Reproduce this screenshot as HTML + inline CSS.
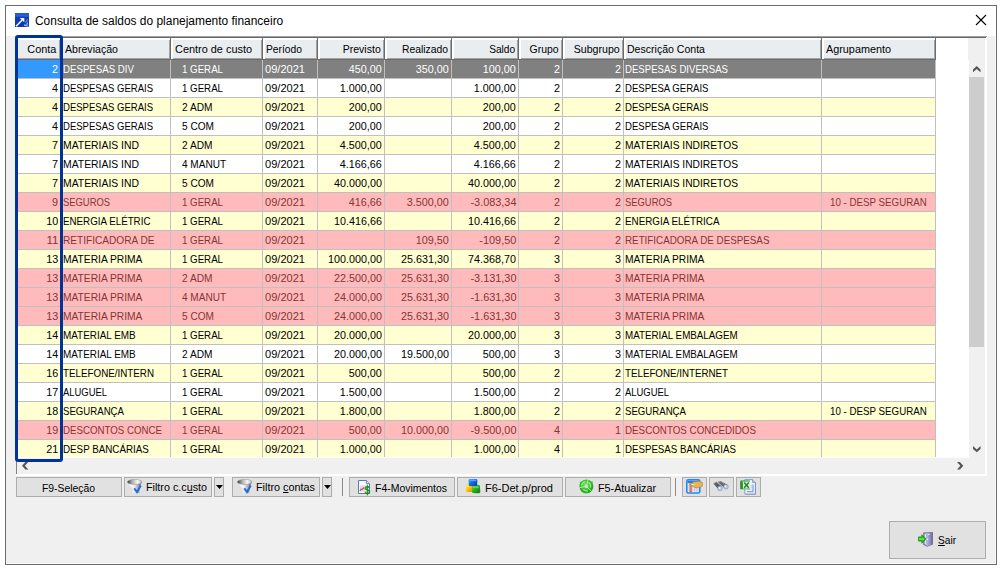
<!DOCTYPE html>
<html><head><meta charset="utf-8"><title>Consulta de saldos do planejamento financeiro</title>
<style>
html,body{margin:0;padding:0;}
body{width:1001px;height:568px;background:#fff;overflow:hidden;position:relative;font-family:"Liberation Sans",sans-serif;font-size:11px;color:#000;}
.abs{position:absolute;}
#win{position:absolute;left:5px;top:5px;width:990px;height:558px;border:1px solid #6b6b6b;background:#f0f0f0;box-shadow:inset -1px -1px 0 #fafafa;}
#title{position:absolute;left:6px;top:6px;width:990px;height:30px;background:#fff;}
#ttext{position:absolute;left:35px;top:14px;transform:scaleX(0.995);transform-origin:left center;font-size:12px;line-height:15px;white-space:nowrap;color:#000;}
.hc{position:absolute;top:38px;height:22px;background:#e9edf0;box-shadow:inset -1px -1px 0 #6b6b6b, inset 2px 2px 0 #fff, inset -2px -2px 0 #a3a3a3;box-sizing:border-box;line-height:23px;white-space:nowrap;overflow:hidden;}
.c{position:absolute;height:18px;line-height:18px;box-sizing:border-box;white-space:nowrap;overflow:hidden;border-right:1px solid #c0c0c0;}
.row{position:absolute;left:16px;width:920px;height:18px;border-bottom:1px solid #c0c0c0;}
.w{background:#fff;}
.y{background:#ffffd2;}
.p{background:#ffbbbb;color:#873434;}
.s{background:#808080;color:#fff;}
.r{text-align:right;padding-right:2px;}
.l{text-align:left;padding-left:2px;}
.i{text-align:left;padding-left:11px;}
.j{text-align:left;padding-left:8px;}
.sx{display:inline-block;white-space:nowrap;}
.lbl{line-height:14px;height:14px;white-space:nowrap;}
.btn{position:absolute;top:477px;height:20px;box-sizing:border-box;border:1px solid #adadad;background:#e1e1e1;line-height:18px;white-space:nowrap;}
</style></head><body>
<div id="win"></div>
<div id="title"></div>
<svg class="abs" style="left:15px;top:13px" width="14" height="14" viewBox="0 0 14 14"><defs><linearGradient id="tg" x1="0" y1="0" x2="0" y2="1"><stop offset="0" stop-color="#1f58d0"/><stop offset="0.24" stop-color="#2a62d8"/><stop offset="0.27" stop-color="#0c3fb6"/><stop offset="1" stop-color="#0a38aa"/></linearGradient></defs><rect width="14" height="14" fill="url(#tg)"/><path d="M1.1 13.3 L7.2 6.9" stroke="#fff" stroke-width="1.5" fill="none"/><path d="M4.7 4.9 L9.3 4.9 L9.3 9.2 Z" fill="#fff"/><path d="M8.6 13 L10.2 10.4 L11 12 L12.6 7.2 L12.8 13.4 Z" fill="#8fb0ee" opacity="0.75"/><path d="M10.6 9.6 L12.4 6.2 M9 12 L13.6 13.4 M11.8 10 L13.4 11.2" stroke="#b9cef6" stroke-width="0.8" opacity="0.8" fill="none"/></svg>
<div id="ttext">Consulta de saldos do planejamento financeiro</div>
<svg class="abs" style="left:975px;top:14px" width="12" height="12" viewBox="0 0 12 12"><path d="M1 1 L11 11 M11 1 L1 11" stroke="#000" stroke-width="1.1" fill="none"/></svg>
<div class="abs" style="left:16px;top:36px;width:971px;height:1px;background:#a0a0a0"></div>
<div class="abs" style="left:16px;top:37px;width:970px;height:1px;background:#696969"></div>
<div class="abs" style="left:16px;top:36px;width:1px;height:438px;background:#828282"></div>
<div class="abs" style="left:17px;top:38px;width:952px;height:420px;background:#fff"></div>
<div class="abs" style="left:16px;top:474px;width:971px;height:2px;background:#fff"></div>
<div class="abs" style="left:985px;top:38px;width:2px;height:438px;background:#fff"></div>
<div class="hc" style="left:16px;width:45px;text-align:right;padding-right:5px;"><span class="sx" style="transform:scaleX(0.9878);transform-origin:right center">Conta</span></div>
<div class="hc" style="left:61px;width:110px;text-align:left;padding-left:4px;"><span class="sx" style="transform:scaleX(0.9628);transform-origin:left center">Abreviação</span></div>
<div class="hc" style="left:171px;width:92px;text-align:left;padding-left:4px;"><span class="sx" style="transform:scaleX(0.9915);transform-origin:left center">Centro de custo</span></div>
<div class="hc" style="left:263px;width:55px;text-align:left;padding-left:3px;"><span class="sx" style="transform:scaleX(0.9343);transform-origin:left center">Período</span></div>
<div class="hc" style="left:318px;width:67px;text-align:right;padding-right:4px;"><span class="sx" style="transform:scaleX(0.9560);transform-origin:right center">Previsto</span></div>
<div class="hc" style="left:385px;width:67px;text-align:right;padding-right:4px;"><span class="sx" style="transform:scaleX(0.9403);transform-origin:right center">Realizado</span></div>
<div class="hc" style="left:452px;width:67px;text-align:right;padding-right:4px;"><span class="sx" style="transform:scaleX(0.9239);transform-origin:right center">Saldo</span></div>
<div class="hc" style="left:519px;width:44px;text-align:right;padding-right:4px;"><span class="sx" style="transform:scaleX(0.9484);transform-origin:right center">Grupo</span></div>
<div class="hc" style="left:563px;width:61px;text-align:right;padding-right:4px;"><span class="sx" style="transform:scaleX(0.9640);transform-origin:right center">Subgrupo</span></div>
<div class="hc" style="left:624px;width:198px;text-align:left;padding-left:3px;"><span class="sx" style="transform:scaleX(0.9591);transform-origin:left center">Descrição Conta</span></div>
<div class="hc" style="left:822px;width:114px;text-align:left;padding-left:4px;"><span class="sx" style="transform:scaleX(0.9841);transform-origin:left center">Agrupamento</span></div>
<div class="row s" style="top:60px"><div class="c r" style="left:0px;width:45px;background:#3399ff;"><span class="sx" style="transform:scaleX(0.9796);transform-origin:right center">2</span></div><div class="c l" style="left:45px;width:110px;"><span class="sx" style="transform:scaleX(0.8798);transform-origin:left center">DESPESAS DIV</span></div><div class="c i" style="left:155px;width:92px;"><span class="sx" style="transform:scaleX(0.8823);transform-origin:left center">1 GERAL</span></div><div class="c l" style="left:247px;width:55px;"><span class="sx" style="transform:scaleX(1.0059);transform-origin:left center">09/2021</span></div><div class="c r" style="left:302px;width:67px;"><span class="sx" style="transform:scaleX(0.9805);transform-origin:right center">450,00</span></div><div class="c r" style="left:369px;width:67px;"><span class="sx" style="transform:scaleX(0.9805);transform-origin:right center">350,00</span></div><div class="c r" style="left:436px;width:67px;"><span class="sx" style="transform:scaleX(0.9805);transform-origin:right center">100,00</span></div><div class="c r" style="left:503px;width:44px;"><span class="sx" style="transform:scaleX(0.9796);transform-origin:right center">2</span></div><div class="c r" style="left:547px;width:61px;"><span class="sx" style="transform:scaleX(0.9796);transform-origin:right center">2</span></div><div class="c l" style="left:608px;width:198px;padding-left:1px;"><span class="sx" style="transform:scaleX(0.8729);transform-origin:left center">DESPESAS DIVERSAS</span></div><div class="c j" style="left:806px;width:114px;"></div></div>
<div class="row w" style="top:79px"><div class="c r" style="left:0px;width:45px;"><span class="sx" style="transform:scaleX(0.9796);transform-origin:right center">4</span></div><div class="c l" style="left:45px;width:110px;"><span class="sx" style="transform:scaleX(0.8659);transform-origin:left center">DESPESAS GERAIS</span></div><div class="c i" style="left:155px;width:92px;"><span class="sx" style="transform:scaleX(0.8823);transform-origin:left center">1 GERAL</span></div><div class="c l" style="left:247px;width:55px;"><span class="sx" style="transform:scaleX(1.0059);transform-origin:left center">09/2021</span></div><div class="c r" style="left:302px;width:67px;"><span class="sx" style="transform:scaleX(0.9807);transform-origin:right center">1.000,00</span></div><div class="c r" style="left:369px;width:67px;"></div><div class="c r" style="left:436px;width:67px;"><span class="sx" style="transform:scaleX(0.9807);transform-origin:right center">1.000,00</span></div><div class="c r" style="left:503px;width:44px;"><span class="sx" style="transform:scaleX(0.9796);transform-origin:right center">2</span></div><div class="c r" style="left:547px;width:61px;"><span class="sx" style="transform:scaleX(0.9796);transform-origin:right center">2</span></div><div class="c l" style="left:608px;width:198px;padding-left:1px;"><span class="sx" style="transform:scaleX(0.8696);transform-origin:left center">DESPESA GERAIS</span></div><div class="c j" style="left:806px;width:114px;"></div></div>
<div class="row y" style="top:98px"><div class="c r" style="left:0px;width:45px;"><span class="sx" style="transform:scaleX(0.9796);transform-origin:right center">4</span></div><div class="c l" style="left:45px;width:110px;"><span class="sx" style="transform:scaleX(0.8659);transform-origin:left center">DESPESAS GERAIS</span></div><div class="c i" style="left:155px;width:92px;"><span class="sx" style="transform:scaleX(0.9219);transform-origin:left center">2 ADM</span></div><div class="c l" style="left:247px;width:55px;"><span class="sx" style="transform:scaleX(1.0059);transform-origin:left center">09/2021</span></div><div class="c r" style="left:302px;width:67px;"><span class="sx" style="transform:scaleX(0.9805);transform-origin:right center">200,00</span></div><div class="c r" style="left:369px;width:67px;"></div><div class="c r" style="left:436px;width:67px;"><span class="sx" style="transform:scaleX(0.9805);transform-origin:right center">200,00</span></div><div class="c r" style="left:503px;width:44px;"><span class="sx" style="transform:scaleX(0.9796);transform-origin:right center">2</span></div><div class="c r" style="left:547px;width:61px;"><span class="sx" style="transform:scaleX(0.9796);transform-origin:right center">2</span></div><div class="c l" style="left:608px;width:198px;padding-left:1px;"><span class="sx" style="transform:scaleX(0.8696);transform-origin:left center">DESPESA GERAIS</span></div><div class="c j" style="left:806px;width:114px;"></div></div>
<div class="row w" style="top:117px"><div class="c r" style="left:0px;width:45px;"><span class="sx" style="transform:scaleX(0.9796);transform-origin:right center">4</span></div><div class="c l" style="left:45px;width:110px;"><span class="sx" style="transform:scaleX(0.8659);transform-origin:left center">DESPESAS GERAIS</span></div><div class="c i" style="left:155px;width:92px;"><span class="sx" style="transform:scaleX(0.9184);transform-origin:left center">5 COM</span></div><div class="c l" style="left:247px;width:55px;"><span class="sx" style="transform:scaleX(1.0059);transform-origin:left center">09/2021</span></div><div class="c r" style="left:302px;width:67px;"><span class="sx" style="transform:scaleX(0.9805);transform-origin:right center">200,00</span></div><div class="c r" style="left:369px;width:67px;"></div><div class="c r" style="left:436px;width:67px;"><span class="sx" style="transform:scaleX(0.9805);transform-origin:right center">200,00</span></div><div class="c r" style="left:503px;width:44px;"><span class="sx" style="transform:scaleX(0.9796);transform-origin:right center">2</span></div><div class="c r" style="left:547px;width:61px;"><span class="sx" style="transform:scaleX(0.9796);transform-origin:right center">2</span></div><div class="c l" style="left:608px;width:198px;padding-left:1px;"><span class="sx" style="transform:scaleX(0.8696);transform-origin:left center">DESPESA GERAIS</span></div><div class="c j" style="left:806px;width:114px;"></div></div>
<div class="row y" style="top:136px"><div class="c r" style="left:0px;width:45px;"><span class="sx" style="transform:scaleX(0.9796);transform-origin:right center">7</span></div><div class="c l" style="left:45px;width:110px;"><span class="sx" style="transform:scaleX(0.9443);transform-origin:left center">MATERIAIS IND</span></div><div class="c i" style="left:155px;width:92px;"><span class="sx" style="transform:scaleX(0.9219);transform-origin:left center">2 ADM</span></div><div class="c l" style="left:247px;width:55px;"><span class="sx" style="transform:scaleX(1.0059);transform-origin:left center">09/2021</span></div><div class="c r" style="left:302px;width:67px;"><span class="sx" style="transform:scaleX(0.9807);transform-origin:right center">4.500,00</span></div><div class="c r" style="left:369px;width:67px;"></div><div class="c r" style="left:436px;width:67px;"><span class="sx" style="transform:scaleX(0.9807);transform-origin:right center">4.500,00</span></div><div class="c r" style="left:503px;width:44px;"><span class="sx" style="transform:scaleX(0.9796);transform-origin:right center">2</span></div><div class="c r" style="left:547px;width:61px;"><span class="sx" style="transform:scaleX(0.9796);transform-origin:right center">2</span></div><div class="c l" style="left:608px;width:198px;padding-left:1px;"><span class="sx" style="transform:scaleX(0.9321);transform-origin:left center">MATERIAIS INDIRETOS</span></div><div class="c j" style="left:806px;width:114px;"></div></div>
<div class="row w" style="top:155px"><div class="c r" style="left:0px;width:45px;"><span class="sx" style="transform:scaleX(0.9796);transform-origin:right center">7</span></div><div class="c l" style="left:45px;width:110px;"><span class="sx" style="transform:scaleX(0.9443);transform-origin:left center">MATERIAIS IND</span></div><div class="c i" style="left:155px;width:92px;"><span class="sx" style="transform:scaleX(0.9113);transform-origin:left center">4 MANUT</span></div><div class="c l" style="left:247px;width:55px;"><span class="sx" style="transform:scaleX(1.0059);transform-origin:left center">09/2021</span></div><div class="c r" style="left:302px;width:67px;"><span class="sx" style="transform:scaleX(0.9807);transform-origin:right center">4.166,66</span></div><div class="c r" style="left:369px;width:67px;"></div><div class="c r" style="left:436px;width:67px;"><span class="sx" style="transform:scaleX(0.9807);transform-origin:right center">4.166,66</span></div><div class="c r" style="left:503px;width:44px;"><span class="sx" style="transform:scaleX(0.9796);transform-origin:right center">2</span></div><div class="c r" style="left:547px;width:61px;"><span class="sx" style="transform:scaleX(0.9796);transform-origin:right center">2</span></div><div class="c l" style="left:608px;width:198px;padding-left:1px;"><span class="sx" style="transform:scaleX(0.9321);transform-origin:left center">MATERIAIS INDIRETOS</span></div><div class="c j" style="left:806px;width:114px;"></div></div>
<div class="row y" style="top:174px"><div class="c r" style="left:0px;width:45px;"><span class="sx" style="transform:scaleX(0.9796);transform-origin:right center">7</span></div><div class="c l" style="left:45px;width:110px;"><span class="sx" style="transform:scaleX(0.9443);transform-origin:left center">MATERIAIS IND</span></div><div class="c i" style="left:155px;width:92px;"><span class="sx" style="transform:scaleX(0.9184);transform-origin:left center">5 COM</span></div><div class="c l" style="left:247px;width:55px;"><span class="sx" style="transform:scaleX(1.0059);transform-origin:left center">09/2021</span></div><div class="c r" style="left:302px;width:67px;"><span class="sx" style="transform:scaleX(0.9808);transform-origin:right center">40.000,00</span></div><div class="c r" style="left:369px;width:67px;"></div><div class="c r" style="left:436px;width:67px;"><span class="sx" style="transform:scaleX(0.9808);transform-origin:right center">40.000,00</span></div><div class="c r" style="left:503px;width:44px;"><span class="sx" style="transform:scaleX(0.9796);transform-origin:right center">2</span></div><div class="c r" style="left:547px;width:61px;"><span class="sx" style="transform:scaleX(0.9796);transform-origin:right center">2</span></div><div class="c l" style="left:608px;width:198px;padding-left:1px;"><span class="sx" style="transform:scaleX(0.9321);transform-origin:left center">MATERIAIS INDIRETOS</span></div><div class="c j" style="left:806px;width:114px;"></div></div>
<div class="row p" style="top:193px"><div class="c r" style="left:0px;width:45px;"><span class="sx" style="transform:scaleX(0.9796);transform-origin:right center">9</span></div><div class="c l" style="left:45px;width:110px;"><span class="sx" style="transform:scaleX(0.8543);transform-origin:left center">SEGUROS</span></div><div class="c i" style="left:155px;width:92px;"><span class="sx" style="transform:scaleX(0.8823);transform-origin:left center">1 GERAL</span></div><div class="c l" style="left:247px;width:55px;"><span class="sx" style="transform:scaleX(1.0059);transform-origin:left center">09/2021</span></div><div class="c r" style="left:302px;width:67px;"><span class="sx" style="transform:scaleX(0.9805);transform-origin:right center">416,66</span></div><div class="c r" style="left:369px;width:67px;"><span class="sx" style="transform:scaleX(0.9807);transform-origin:right center">3.500,00</span></div><div class="c r" style="left:436px;width:67px;"><span class="sx" style="transform:scaleX(0.9896);transform-origin:right center">-3.083,34</span></div><div class="c r" style="left:503px;width:44px;"><span class="sx" style="transform:scaleX(0.9796);transform-origin:right center">2</span></div><div class="c r" style="left:547px;width:61px;"><span class="sx" style="transform:scaleX(0.9796);transform-origin:right center">2</span></div><div class="c l" style="left:608px;width:198px;padding-left:1px;"><span class="sx" style="transform:scaleX(0.8543);transform-origin:left center">SEGUROS</span></div><div class="c j" style="left:806px;width:114px;"><span class="sx" style="transform:scaleX(0.8865);transform-origin:left center">10 - DESP SEGURAN</span></div></div>
<div class="row y" style="top:212px"><div class="c r" style="left:0px;width:45px;"><span class="sx" style="transform:scaleX(0.9796);transform-origin:right center">10</span></div><div class="c l" style="left:45px;width:110px;"><span class="sx" style="transform:scaleX(0.8886);transform-origin:left center">ENERGIA ELÉTRIC</span></div><div class="c i" style="left:155px;width:92px;"><span class="sx" style="transform:scaleX(0.8823);transform-origin:left center">1 GERAL</span></div><div class="c l" style="left:247px;width:55px;"><span class="sx" style="transform:scaleX(1.0059);transform-origin:left center">09/2021</span></div><div class="c r" style="left:302px;width:67px;"><span class="sx" style="transform:scaleX(0.9808);transform-origin:right center">10.416,66</span></div><div class="c r" style="left:369px;width:67px;"></div><div class="c r" style="left:436px;width:67px;"><span class="sx" style="transform:scaleX(0.9808);transform-origin:right center">10.416,66</span></div><div class="c r" style="left:503px;width:44px;"><span class="sx" style="transform:scaleX(0.9796);transform-origin:right center">2</span></div><div class="c r" style="left:547px;width:61px;"><span class="sx" style="transform:scaleX(0.9796);transform-origin:right center">2</span></div><div class="c l" style="left:608px;width:198px;padding-left:1px;"><span class="sx" style="transform:scaleX(0.8932);transform-origin:left center">ENERGIA ELÉTRICA</span></div><div class="c j" style="left:806px;width:114px;"></div></div>
<div class="row p" style="top:231px"><div class="c r" style="left:0px;width:45px;"><span class="sx" style="transform:scaleX(1.0506);transform-origin:right center">11</span></div><div class="c l" style="left:45px;width:110px;"><span class="sx" style="transform:scaleX(0.9178);transform-origin:left center">RETIFICADORA DE</span></div><div class="c i" style="left:155px;width:92px;"><span class="sx" style="transform:scaleX(0.8823);transform-origin:left center">1 GERAL</span></div><div class="c l" style="left:247px;width:55px;"><span class="sx" style="transform:scaleX(1.0059);transform-origin:left center">09/2021</span></div><div class="c r" style="left:302px;width:67px;"></div><div class="c r" style="left:369px;width:67px;"><span class="sx" style="transform:scaleX(0.9805);transform-origin:right center">109,50</span></div><div class="c r" style="left:436px;width:67px;"><span class="sx" style="transform:scaleX(0.9916);transform-origin:right center">-109,50</span></div><div class="c r" style="left:503px;width:44px;"><span class="sx" style="transform:scaleX(0.9796);transform-origin:right center">2</span></div><div class="c r" style="left:547px;width:61px;"><span class="sx" style="transform:scaleX(0.9796);transform-origin:right center">2</span></div><div class="c l" style="left:608px;width:198px;padding-left:1px;"><span class="sx" style="transform:scaleX(0.8918);transform-origin:left center">RETIFICADORA DE DESPESAS</span></div><div class="c j" style="left:806px;width:114px;"></div></div>
<div class="row y" style="top:250px"><div class="c r" style="left:0px;width:45px;"><span class="sx" style="transform:scaleX(0.9796);transform-origin:right center">13</span></div><div class="c l" style="left:45px;width:110px;"><span class="sx" style="transform:scaleX(0.9304);transform-origin:left center">MATERIA PRIMA</span></div><div class="c i" style="left:155px;width:92px;"><span class="sx" style="transform:scaleX(0.8823);transform-origin:left center">1 GERAL</span></div><div class="c l" style="left:247px;width:55px;"><span class="sx" style="transform:scaleX(1.0059);transform-origin:left center">09/2021</span></div><div class="c r" style="left:302px;width:67px;"><span class="sx" style="transform:scaleX(0.9807);transform-origin:right center">100.000,00</span></div><div class="c r" style="left:369px;width:67px;"><span class="sx" style="transform:scaleX(0.9808);transform-origin:right center">25.631,30</span></div><div class="c r" style="left:436px;width:67px;"><span class="sx" style="transform:scaleX(0.9808);transform-origin:right center">74.368,70</span></div><div class="c r" style="left:503px;width:44px;"><span class="sx" style="transform:scaleX(0.9796);transform-origin:right center">3</span></div><div class="c r" style="left:547px;width:61px;"><span class="sx" style="transform:scaleX(0.9796);transform-origin:right center">3</span></div><div class="c l" style="left:608px;width:198px;padding-left:1px;"><span class="sx" style="transform:scaleX(0.9304);transform-origin:left center">MATERIA PRIMA</span></div><div class="c j" style="left:806px;width:114px;"></div></div>
<div class="row p" style="top:269px"><div class="c r" style="left:0px;width:45px;"><span class="sx" style="transform:scaleX(0.9796);transform-origin:right center">13</span></div><div class="c l" style="left:45px;width:110px;"><span class="sx" style="transform:scaleX(0.9304);transform-origin:left center">MATERIA PRIMA</span></div><div class="c i" style="left:155px;width:92px;"><span class="sx" style="transform:scaleX(0.9219);transform-origin:left center">2 ADM</span></div><div class="c l" style="left:247px;width:55px;"><span class="sx" style="transform:scaleX(1.0059);transform-origin:left center">09/2021</span></div><div class="c r" style="left:302px;width:67px;"><span class="sx" style="transform:scaleX(0.9808);transform-origin:right center">22.500,00</span></div><div class="c r" style="left:369px;width:67px;"><span class="sx" style="transform:scaleX(0.9808);transform-origin:right center">25.631,30</span></div><div class="c r" style="left:436px;width:67px;"><span class="sx" style="transform:scaleX(0.9896);transform-origin:right center">-3.131,30</span></div><div class="c r" style="left:503px;width:44px;"><span class="sx" style="transform:scaleX(0.9796);transform-origin:right center">3</span></div><div class="c r" style="left:547px;width:61px;"><span class="sx" style="transform:scaleX(0.9796);transform-origin:right center">3</span></div><div class="c l" style="left:608px;width:198px;padding-left:1px;"><span class="sx" style="transform:scaleX(0.9304);transform-origin:left center">MATERIA PRIMA</span></div><div class="c j" style="left:806px;width:114px;"></div></div>
<div class="row p" style="top:288px"><div class="c r" style="left:0px;width:45px;"><span class="sx" style="transform:scaleX(0.9796);transform-origin:right center">13</span></div><div class="c l" style="left:45px;width:110px;"><span class="sx" style="transform:scaleX(0.9304);transform-origin:left center">MATERIA PRIMA</span></div><div class="c i" style="left:155px;width:92px;"><span class="sx" style="transform:scaleX(0.9113);transform-origin:left center">4 MANUT</span></div><div class="c l" style="left:247px;width:55px;"><span class="sx" style="transform:scaleX(1.0059);transform-origin:left center">09/2021</span></div><div class="c r" style="left:302px;width:67px;"><span class="sx" style="transform:scaleX(0.9808);transform-origin:right center">24.000,00</span></div><div class="c r" style="left:369px;width:67px;"><span class="sx" style="transform:scaleX(0.9808);transform-origin:right center">25.631,30</span></div><div class="c r" style="left:436px;width:67px;"><span class="sx" style="transform:scaleX(0.9896);transform-origin:right center">-1.631,30</span></div><div class="c r" style="left:503px;width:44px;"><span class="sx" style="transform:scaleX(0.9796);transform-origin:right center">3</span></div><div class="c r" style="left:547px;width:61px;"><span class="sx" style="transform:scaleX(0.9796);transform-origin:right center">3</span></div><div class="c l" style="left:608px;width:198px;padding-left:1px;"><span class="sx" style="transform:scaleX(0.9304);transform-origin:left center">MATERIA PRIMA</span></div><div class="c j" style="left:806px;width:114px;"></div></div>
<div class="row p" style="top:307px"><div class="c r" style="left:0px;width:45px;"><span class="sx" style="transform:scaleX(0.9796);transform-origin:right center">13</span></div><div class="c l" style="left:45px;width:110px;"><span class="sx" style="transform:scaleX(0.9304);transform-origin:left center">MATERIA PRIMA</span></div><div class="c i" style="left:155px;width:92px;"><span class="sx" style="transform:scaleX(0.9184);transform-origin:left center">5 COM</span></div><div class="c l" style="left:247px;width:55px;"><span class="sx" style="transform:scaleX(1.0059);transform-origin:left center">09/2021</span></div><div class="c r" style="left:302px;width:67px;"><span class="sx" style="transform:scaleX(0.9808);transform-origin:right center">24.000,00</span></div><div class="c r" style="left:369px;width:67px;"><span class="sx" style="transform:scaleX(0.9808);transform-origin:right center">25.631,30</span></div><div class="c r" style="left:436px;width:67px;"><span class="sx" style="transform:scaleX(0.9896);transform-origin:right center">-1.631,30</span></div><div class="c r" style="left:503px;width:44px;"><span class="sx" style="transform:scaleX(0.9796);transform-origin:right center">3</span></div><div class="c r" style="left:547px;width:61px;"><span class="sx" style="transform:scaleX(0.9796);transform-origin:right center">3</span></div><div class="c l" style="left:608px;width:198px;padding-left:1px;"><span class="sx" style="transform:scaleX(0.9304);transform-origin:left center">MATERIA PRIMA</span></div><div class="c j" style="left:806px;width:114px;"></div></div>
<div class="row y" style="top:326px"><div class="c r" style="left:0px;width:45px;"><span class="sx" style="transform:scaleX(0.9796);transform-origin:right center">14</span></div><div class="c l" style="left:45px;width:110px;"><span class="sx" style="transform:scaleX(0.9002);transform-origin:left center">MATERIAL EMB</span></div><div class="c i" style="left:155px;width:92px;"><span class="sx" style="transform:scaleX(0.8823);transform-origin:left center">1 GERAL</span></div><div class="c l" style="left:247px;width:55px;"><span class="sx" style="transform:scaleX(1.0059);transform-origin:left center">09/2021</span></div><div class="c r" style="left:302px;width:67px;"><span class="sx" style="transform:scaleX(0.9808);transform-origin:right center">20.000,00</span></div><div class="c r" style="left:369px;width:67px;"></div><div class="c r" style="left:436px;width:67px;"><span class="sx" style="transform:scaleX(0.9808);transform-origin:right center">20.000,00</span></div><div class="c r" style="left:503px;width:44px;"><span class="sx" style="transform:scaleX(0.9796);transform-origin:right center">3</span></div><div class="c r" style="left:547px;width:61px;"><span class="sx" style="transform:scaleX(0.9796);transform-origin:right center">3</span></div><div class="c l" style="left:608px;width:198px;padding-left:1px;"><span class="sx" style="transform:scaleX(0.8902);transform-origin:left center">MATERIAL EMBALAGEM</span></div><div class="c j" style="left:806px;width:114px;"></div></div>
<div class="row w" style="top:345px"><div class="c r" style="left:0px;width:45px;"><span class="sx" style="transform:scaleX(0.9796);transform-origin:right center">14</span></div><div class="c l" style="left:45px;width:110px;"><span class="sx" style="transform:scaleX(0.9002);transform-origin:left center">MATERIAL EMB</span></div><div class="c i" style="left:155px;width:92px;"><span class="sx" style="transform:scaleX(0.9219);transform-origin:left center">2 ADM</span></div><div class="c l" style="left:247px;width:55px;"><span class="sx" style="transform:scaleX(1.0059);transform-origin:left center">09/2021</span></div><div class="c r" style="left:302px;width:67px;"><span class="sx" style="transform:scaleX(0.9808);transform-origin:right center">20.000,00</span></div><div class="c r" style="left:369px;width:67px;"><span class="sx" style="transform:scaleX(0.9808);transform-origin:right center">19.500,00</span></div><div class="c r" style="left:436px;width:67px;"><span class="sx" style="transform:scaleX(0.9805);transform-origin:right center">500,00</span></div><div class="c r" style="left:503px;width:44px;"><span class="sx" style="transform:scaleX(0.9796);transform-origin:right center">3</span></div><div class="c r" style="left:547px;width:61px;"><span class="sx" style="transform:scaleX(0.9796);transform-origin:right center">3</span></div><div class="c l" style="left:608px;width:198px;padding-left:1px;"><span class="sx" style="transform:scaleX(0.8902);transform-origin:left center">MATERIAL EMBALAGEM</span></div><div class="c j" style="left:806px;width:114px;"></div></div>
<div class="row y" style="top:364px"><div class="c r" style="left:0px;width:45px;"><span class="sx" style="transform:scaleX(0.9796);transform-origin:right center">16</span></div><div class="c l" style="left:45px;width:110px;"><span class="sx" style="transform:scaleX(0.8915);transform-origin:left center">TELEFONE/INTERN</span></div><div class="c i" style="left:155px;width:92px;"><span class="sx" style="transform:scaleX(0.8823);transform-origin:left center">1 GERAL</span></div><div class="c l" style="left:247px;width:55px;"><span class="sx" style="transform:scaleX(1.0059);transform-origin:left center">09/2021</span></div><div class="c r" style="left:302px;width:67px;"><span class="sx" style="transform:scaleX(0.9805);transform-origin:right center">500,00</span></div><div class="c r" style="left:369px;width:67px;"></div><div class="c r" style="left:436px;width:67px;"><span class="sx" style="transform:scaleX(0.9805);transform-origin:right center">500,00</span></div><div class="c r" style="left:503px;width:44px;"><span class="sx" style="transform:scaleX(0.9796);transform-origin:right center">2</span></div><div class="c r" style="left:547px;width:61px;"><span class="sx" style="transform:scaleX(0.9796);transform-origin:right center">2</span></div><div class="c l" style="left:608px;width:198px;padding-left:1px;"><span class="sx" style="transform:scaleX(0.8870);transform-origin:left center">TELEFONE/INTERNET</span></div><div class="c j" style="left:806px;width:114px;"></div></div>
<div class="row w" style="top:383px"><div class="c r" style="left:0px;width:45px;"><span class="sx" style="transform:scaleX(0.9796);transform-origin:right center">17</span></div><div class="c l" style="left:45px;width:110px;"><span class="sx" style="transform:scaleX(0.8567);transform-origin:left center">ALUGUEL</span></div><div class="c i" style="left:155px;width:92px;"><span class="sx" style="transform:scaleX(0.8823);transform-origin:left center">1 GERAL</span></div><div class="c l" style="left:247px;width:55px;"><span class="sx" style="transform:scaleX(1.0059);transform-origin:left center">09/2021</span></div><div class="c r" style="left:302px;width:67px;"><span class="sx" style="transform:scaleX(0.9807);transform-origin:right center">1.500,00</span></div><div class="c r" style="left:369px;width:67px;"></div><div class="c r" style="left:436px;width:67px;"><span class="sx" style="transform:scaleX(0.9807);transform-origin:right center">1.500,00</span></div><div class="c r" style="left:503px;width:44px;"><span class="sx" style="transform:scaleX(0.9796);transform-origin:right center">2</span></div><div class="c r" style="left:547px;width:61px;"><span class="sx" style="transform:scaleX(0.9796);transform-origin:right center">2</span></div><div class="c l" style="left:608px;width:198px;padding-left:1px;"><span class="sx" style="transform:scaleX(0.8567);transform-origin:left center">ALUGUEL</span></div><div class="c j" style="left:806px;width:114px;"></div></div>
<div class="row y" style="top:402px"><div class="c r" style="left:0px;width:45px;"><span class="sx" style="transform:scaleX(0.9796);transform-origin:right center">18</span></div><div class="c l" style="left:45px;width:110px;"><span class="sx" style="transform:scaleX(0.8753);transform-origin:left center">SEGURANÇA</span></div><div class="c i" style="left:155px;width:92px;"><span class="sx" style="transform:scaleX(0.8823);transform-origin:left center">1 GERAL</span></div><div class="c l" style="left:247px;width:55px;"><span class="sx" style="transform:scaleX(1.0059);transform-origin:left center">09/2021</span></div><div class="c r" style="left:302px;width:67px;"><span class="sx" style="transform:scaleX(0.9807);transform-origin:right center">1.800,00</span></div><div class="c r" style="left:369px;width:67px;"></div><div class="c r" style="left:436px;width:67px;"><span class="sx" style="transform:scaleX(0.9807);transform-origin:right center">1.800,00</span></div><div class="c r" style="left:503px;width:44px;"><span class="sx" style="transform:scaleX(0.9796);transform-origin:right center">2</span></div><div class="c r" style="left:547px;width:61px;"><span class="sx" style="transform:scaleX(0.9796);transform-origin:right center">2</span></div><div class="c l" style="left:608px;width:198px;padding-left:1px;"><span class="sx" style="transform:scaleX(0.8753);transform-origin:left center">SEGURANÇA</span></div><div class="c j" style="left:806px;width:114px;"><span class="sx" style="transform:scaleX(0.8865);transform-origin:left center">10 - DESP SEGURAN</span></div></div>
<div class="row p" style="top:421px"><div class="c r" style="left:0px;width:45px;"><span class="sx" style="transform:scaleX(0.9796);transform-origin:right center">19</span></div><div class="c l" style="left:45px;width:110px;"><span class="sx" style="transform:scaleX(0.8818);transform-origin:left center">DESCONTOS CONCE</span></div><div class="c i" style="left:155px;width:92px;"><span class="sx" style="transform:scaleX(0.8823);transform-origin:left center">1 GERAL</span></div><div class="c l" style="left:247px;width:55px;"><span class="sx" style="transform:scaleX(1.0059);transform-origin:left center">09/2021</span></div><div class="c r" style="left:302px;width:67px;"><span class="sx" style="transform:scaleX(0.9805);transform-origin:right center">500,00</span></div><div class="c r" style="left:369px;width:67px;"><span class="sx" style="transform:scaleX(0.9808);transform-origin:right center">10.000,00</span></div><div class="c r" style="left:436px;width:67px;"><span class="sx" style="transform:scaleX(0.9896);transform-origin:right center">-9.500,00</span></div><div class="c r" style="left:503px;width:44px;"><span class="sx" style="transform:scaleX(0.9796);transform-origin:right center">4</span></div><div class="c r" style="left:547px;width:61px;"><span class="sx" style="transform:scaleX(0.9796);transform-origin:right center">1</span></div><div class="c l" style="left:608px;width:198px;padding-left:1px;"><span class="sx" style="transform:scaleX(0.8906);transform-origin:left center">DESCONTOS CONCEDIDOS</span></div><div class="c j" style="left:806px;width:114px;"></div></div>
<div class="row y" style="top:440px"><div class="c r" style="left:0px;width:45px;"><span class="sx" style="transform:scaleX(0.9796);transform-origin:right center">21</span></div><div class="c l" style="left:45px;width:110px;"><span class="sx" style="transform:scaleX(0.8903);transform-origin:left center">DESP BANCÁRIAS</span></div><div class="c i" style="left:155px;width:92px;"><span class="sx" style="transform:scaleX(0.8823);transform-origin:left center">1 GERAL</span></div><div class="c l" style="left:247px;width:55px;"><span class="sx" style="transform:scaleX(1.0059);transform-origin:left center">09/2021</span></div><div class="c r" style="left:302px;width:67px;"><span class="sx" style="transform:scaleX(0.9807);transform-origin:right center">1.000,00</span></div><div class="c r" style="left:369px;width:67px;"></div><div class="c r" style="left:436px;width:67px;"><span class="sx" style="transform:scaleX(0.9807);transform-origin:right center">1.000,00</span></div><div class="c r" style="left:503px;width:44px;"><span class="sx" style="transform:scaleX(0.9796);transform-origin:right center">4</span></div><div class="c r" style="left:547px;width:61px;"><span class="sx" style="transform:scaleX(0.9796);transform-origin:right center">1</span></div><div class="c l" style="left:608px;width:198px;padding-left:1px;"><span class="sx" style="transform:scaleX(0.8814);transform-origin:left center">DESPESAS BANCÁRIAS</span></div><div class="c j" style="left:806px;width:114px;"></div></div>
<div class="abs" style="left:968px;top:38px;width:17px;height:22px;background:#f0f0f0"></div>
<div class="abs" style="left:969px;top:77px;width:15px;height:270px;background:#cdcdcd"></div>
<svg class="abs" style="left:972.8px;top:65.8px;overflow:visible" width="7.5" height="6.3"><polygon points="0,0 3.75,3.4 7.5,0 7.5,2.9 3.75,6.3 0,2.9" fill="#555" transform="translate(0,6.3) scale(1,-1)"/></svg>
<svg class="abs" style="left:972.8px;top:445.8px;overflow:visible" width="7.5" height="6.3"><polygon points="0,0 3.75,3.4 7.5,0 7.5,2.9 3.75,6.3 0,2.9" fill="#555" /></svg>
<div class="abs" style="left:17px;top:457px;width:952px;height:1px;background:#fcfcfc"></div>
<div class="abs" style="left:17px;top:458px;width:968px;height:16px;background:#f0f0f0"></div>
<svg class="abs" style="left:21.8px;top:461.8px;overflow:visible" width="6.3" height="7.5"><polygon points="0,0 3.75,3.4 7.5,0 7.5,2.9 3.75,6.3 0,2.9" fill="#555" transform="translate(6.3,0) rotate(90)"/></svg>
<svg class="abs" style="left:956.9px;top:461.8px;overflow:visible" width="6.3" height="7.5"><polygon points="0,0 3.75,3.4 7.5,0 7.5,2.9 3.75,6.3 0,2.9" fill="#555" transform="translate(0,7.5) rotate(-90)"/></svg>
<div class="abs" style="left:15px;top:35px;width:48px;height:427px;box-sizing:border-box;border:3px solid #003399;border-radius:3px"></div>
<div class="btn" style="left:16px;width:106px;"></div>
<div class="abs lbl" style="left:42px;top:481px"><span class="sx" style="transform:scaleX(0.9420);transform-origin:left center">F9-Seleção</span></div>
<div class="btn" style="left:124px;width:88px;"></div>
<svg class="abs" style="left:127px;top:479px" width="16" height="16" viewBox="0 0 16 16">
<defs><linearGradient id="fea" x1="0" y1="0" x2="1" y2="0"><stop offset="0" stop-color="#2e2e2e"/><stop offset="0.3" stop-color="#a8a8a8"/><stop offset="0.7" stop-color="#fbfbfb"/><stop offset="1" stop-color="#b0b0b0"/></linearGradient>
<linearGradient id="fca" x1="0" y1="0" x2="1" y2="0"><stop offset="0" stop-color="#ffffff"/><stop offset="0.45" stop-color="#f1f1f1"/><stop offset="0.8" stop-color="#9a9a9a"/><stop offset="1" stop-color="#4e4e4e"/></linearGradient></defs>
<path d="M1 3.4 L5.6 9.6 L5.6 13.6 Q9 15.6 12.4 13.6 L12.4 8.4 L14.6 3.4 Z" fill="url(#fca)"/>
<ellipse cx="7.7" cy="2.9" rx="7.3" ry="2.5" fill="url(#fea)" stroke="#8a8a8a" stroke-width="0.5"/>
<path d="M7.2 9.4 L10 13 L13.8 6.4" fill="none" stroke="#1d6fe2" stroke-width="2" stroke-linejoin="miter"/>
</svg>
<div class="abs lbl" style="left:146px;top:480px"><span class="sx" style="transform:scaleX(0.9782);transform-origin:left center">Filtro c.c<u>u</u>sto</span></div>
<div class="btn" style="left:214px;width:10px;"></div>
<div class="btn" style="left:232px;width:88px;"></div>
<svg class="abs" style="left:237px;top:479px" width="16" height="16" viewBox="0 0 16 16">
<defs><linearGradient id="feb" x1="0" y1="0" x2="1" y2="0"><stop offset="0" stop-color="#2e2e2e"/><stop offset="0.3" stop-color="#a8a8a8"/><stop offset="0.7" stop-color="#fbfbfb"/><stop offset="1" stop-color="#b0b0b0"/></linearGradient>
<linearGradient id="fcb" x1="0" y1="0" x2="1" y2="0"><stop offset="0" stop-color="#ffffff"/><stop offset="0.45" stop-color="#f1f1f1"/><stop offset="0.8" stop-color="#9a9a9a"/><stop offset="1" stop-color="#4e4e4e"/></linearGradient></defs>
<path d="M1 3.4 L5.6 9.6 L5.6 13.6 Q9 15.6 12.4 13.6 L12.4 8.4 L14.6 3.4 Z" fill="url(#fcb)"/>
<ellipse cx="7.7" cy="2.9" rx="7.3" ry="2.5" fill="url(#feb)" stroke="#8a8a8a" stroke-width="0.5"/>
<path d="M7.2 9.4 L10 13 L13.8 6.4" fill="none" stroke="#1d6fe2" stroke-width="2" stroke-linejoin="miter"/>
</svg>
<div class="abs lbl" style="left:256px;top:480px"><span class="sx" style="transform:scaleX(0.9846);transform-origin:left center">Filtro <u>c</u>ontas</span></div>
<div class="btn" style="left:322px;width:10px;"></div>
<div class="btn" style="left:349px;width:106px;"></div>
<svg class="abs" style="left:358px;top:479px" width="14" height="17" viewBox="0 0 14 17">
<path d="M0.5 1.5 H8.3 L11.5 4.7 V14.5 H0.5 Z" fill="#fafcff" stroke="#6279b0" stroke-width="1"/>
<path d="M8.3 1.5 V4.7 H11.5" fill="#dbe4f5" stroke="#6279b0" stroke-width="0.9"/>
<rect x="1.8" y="6.2" width="6.6" height="6.4" fill="#cfe3f4"/>
<path d="M1.9 12 L3 10.2 L4.2 10.6 L5.4 9 L6.6 9.4" fill="none" stroke="#e8452f" stroke-width="1.2"/>
<text x="9.4" y="15.3" font-family="Liberation Sans" font-weight="bold" font-size="11.5" fill="#178a1c" text-anchor="middle" transform="translate(9.4,0) scale(0.88,1) translate(-9.4,0)">$</text>
<path d="M9.4 5.6 V16.4" stroke="#178a1c" stroke-width="0.9"/>
</svg>
<div class="abs lbl" style="left:375px;top:481px"><span class="sx" style="transform:scaleX(0.9499);transform-origin:left center">F4-Movimentos</span></div>
<div class="btn" style="left:457px;width:106px;"></div>
<svg class="abs" style="left:465px;top:479px" width="16" height="16" viewBox="0 0 16 16">
<defs><linearGradient id="cb" x1="0" y1="0" x2="1" y2="1"><stop offset="0" stop-color="#3d9cff"/><stop offset="0.5" stop-color="#1268e0"/><stop offset="1" stop-color="#0a36b0"/></linearGradient>
<linearGradient id="cy" x1="0" y1="0" x2="1" y2="1"><stop offset="0" stop-color="#fff04a"/><stop offset="0.5" stop-color="#ffc400"/><stop offset="1" stop-color="#d98800"/></linearGradient>
<linearGradient id="cg" x1="0" y1="0" x2="1" y2="1"><stop offset="0" stop-color="#5fe04a"/><stop offset="0.5" stop-color="#22b022"/><stop offset="1" stop-color="#0c7a12"/></linearGradient></defs>
<path d="M8.2 13 L15.6 13.4 L15.6 7.4 L14.8 14.4 L9.4 14.6 Z" fill="#6a6a6a" opacity="0.5"/>
<rect x="1" y="5" width="6.6" height="8" rx="1.1" fill="url(#cy)"/>
<rect x="7" y="6" width="8" height="8" rx="1.2" fill="url(#cg)"/>
<rect x="3.7" y="0" width="8.6" height="7" rx="1.2" fill="url(#cb)"/>
<rect x="4.4" y="0.5" width="7" height="1.6" rx="0.8" fill="#7cc0ff" opacity="0.65"/>
<rect x="8" y="7.4" width="6" height="1.4" rx="0.7" fill="#a2f08a" opacity="0.6"/>
<rect x="1.6" y="6.4" width="2.4" height="1.4" rx="0.7" fill="#fff7a0" opacity="0.8"/>
</svg>
<div class="abs lbl" style="left:485px;top:481px"><span class="sx" style="transform:scaleX(1.0018);transform-origin:left center">F6-Det.p/prod</span></div>
<div class="btn" style="left:565px;width:106px;"></div>
<svg class="abs" style="left:579px;top:479px" width="15" height="15" viewBox="0 0 15 15">
<defs><radialGradient id="rg" cx="0.45" cy="0.4" r="0.65"><stop offset="0" stop-color="#7cf060"/><stop offset="0.6" stop-color="#2fc326"/><stop offset="1" stop-color="#178a14"/></radialGradient></defs>
<circle cx="7.5" cy="7.7" r="7" fill="#8a8a8a" opacity="0.35"/>
<circle cx="7.3" cy="7.3" r="6.9" fill="url(#rg)"/>
<circle cx="7.4" cy="7.4" r="1.7" fill="#dcdcdc"/>
<path d="M7.4 7.4 L9.2 0.2 M7.4 7.4 L12.6 12.4 M7.4 7.4 L0.2 8.6" stroke="#d6d6d6" stroke-width="0.9" fill="none"/>
<path d="M0.6 2.6 L3.6 3.4 L1.4 5.8 Z M13.8 2.2 L13.2 5.6 L10.8 3.4 Z M6.2 14.6 L6.6 11.4 L9.4 13.2 Z" fill="#2fc326"/>
<path d="M2.4 6 Q3.2 3.4 6 2.6 M9.6 3.2 Q12.2 5 11.4 8.6 M4 10.4 Q6 12.6 8.8 11.6" stroke="#a8ff8c" stroke-width="1.2" fill="none" opacity="0.75"/>
</svg>
<div class="abs lbl" style="left:598px;top:481px"><span class="sx" style="transform:scaleX(0.9781);transform-origin:left center">F5-Atualizar</span></div>
<div class="btn" style="left:682px;width:25px;"></div>
<svg class="abs" style="left:686px;top:479px" width="17" height="15" viewBox="0 0 17 15">
<rect x="0.8" y="0.8" width="13" height="13.2" rx="1.6" fill="#e9ecfb" stroke="#1b8af5" stroke-width="1.6"/>
<rect x="1.6" y="1.6" width="11.4" height="2.6" fill="#2a7be6"/>
<rect x="3.4" y="4.4" width="2.6" height="8.8" fill="#f0603c"/>
<path d="M1.6 6.6 H13 M1.6 8.8 H13 M1.6 11 H13 M6.2 4.4 V13.2 M8.6 4.4 V13.2 M10.8 4.4 V13.2" stroke="#b9bfe6" stroke-width="0.6" fill="none"/>
<path d="M5 5.2 Q6.2 2.6 10 2.4 Q14 1.8 16.4 3.6 L16.4 7 Q14.6 8.8 11 8.8 Q8 9.2 7.4 7.6 Q5 6.8 5 5.2 Z" fill="#e9b35a" stroke="#b07a22" stroke-width="0.6"/>
<path d="M5.2 5.4 L8.6 5.6" stroke="#fbe3ae" stroke-width="1"/>
</svg>
<div class="btn" style="left:709px;width:25px;"></div>
<svg class="abs" style="left:713px;top:481px" width="16" height="11" viewBox="0 0 16 11">
<path d="M0.4 2.6 L3.4 0.8 L8.8 5.4 L5.6 8.6 Z" fill="#5a5a5a"/>
<path d="M4.6 1 L7.8 0 L14.6 4 L11.4 7 Z" fill="#6a6a6a"/>
<path d="M0.8 2.6 L3.4 1.2 L6.4 3.6 M5 1.2 L7.8 0.4 L11 2.4" fill="none" stroke="#a9a9a9" stroke-width="0.9"/>
<circle cx="7" cy="7.4" r="2.3" fill="#a9d0f7" stroke="#7d8fa3" stroke-width="0.6"/>
<circle cx="13" cy="5.8" r="2.3" fill="#a9d0f7" stroke="#7d8fa3" stroke-width="0.6"/>
<circle cx="6.5" cy="6.9" r="0.9" fill="#f2f8ff"/><circle cx="12.5" cy="5.3" r="0.9" fill="#f2f8ff"/>
</svg>
<div class="btn" style="left:736px;width:25px;"></div>
<svg class="abs" style="left:740px;top:479px" width="17" height="16" viewBox="0 0 17 16">
<path d="M5.4 1.2 H13 L16 4 V15.6 H5.4 Z" fill="#3a4f7a" opacity="0.55"/>
<path d="M4.8 0.6 H12.6 L15.4 3.4 V15 H4.8 Z" fill="#eef3fb" stroke="#6f8cc4" stroke-width="0.8"/>
<path d="M12.6 0.6 V3.4 H15.4" fill="#cfdcf2" stroke="#5d7ab6" stroke-width="0.7"/>
<path d="M7 12.6 H13 V5.6" fill="none" stroke="#7fa0dc" stroke-width="1.2"/>
<path d="M7 10.4 H11 M11.2 5.6 V9.2" fill="none" stroke="#b6c9ea" stroke-width="0.9"/>
<rect x="0.2" y="1.4" width="9.8" height="8.8" rx="0.8" fill="#1f8f2e"/>
<rect x="0.8" y="1.9" width="8.6" height="1.6" fill="#49b456" opacity="0.8"/>
<rect x="2.9" y="2.6" width="7.1" height="7" fill="#e2f1d8"/>
<path d="M4.2 3.6 L8.8 8.8 M8.8 3.6 L4.2 8.8" stroke="#23802c" stroke-width="1.5"/>
</svg>
<svg class="abs" style="left:216px;top:485px" width="7" height="4" viewBox="0 0 7 4"><path d="M0 0 L7 0 L3.5 4 Z" fill="#000"/></svg>
<svg class="abs" style="left:324px;top:485px" width="7" height="4" viewBox="0 0 7 4"><path d="M0 0 L7 0 L3.5 4 Z" fill="#000"/></svg>
<div class="abs" style="left:342px;top:478px;width:1px;height:18px;background:#8a8a8a"></div>
<div class="abs" style="left:675px;top:478px;width:1px;height:18px;background:#8a8a8a"></div>
<div class="abs" style="left:889px;top:521px;width:97px;height:38px;box-sizing:border-box;border:1px solid #adadad;background:#e1e1e1"></div>
<svg class="abs" style="left:918px;top:532px" width="16" height="15" viewBox="0 0 16 15">
<defs><linearGradient id="dg" x1="0" y1="0" x2="1" y2="0"><stop offset="0" stop-color="#bcb9ee"/><stop offset="0.6" stop-color="#9792d6"/><stop offset="1" stop-color="#7c78ba"/></linearGradient></defs>
<path d="M5.2 0.6 L14.4 0 Q15 0 15 0.8 L15 12.6 L9 14.7 L5.2 12.8 Z" fill="#777"/>
<path d="M6.6 1.8 L8.6 1.5 L8.6 13.2 L6.6 12 Z" fill="#d6eafc"/>
<path d="M8.3 1 L13.4 0.7 L13.4 12.7 L8.3 14.2 Z" fill="url(#dg)"/>
<path d="M9.8 2.6 L11.6 2.4" stroke="#f0f0ff" stroke-width="0.9"/>
<rect x="9" y="6.6" width="1.2" height="1.3" fill="#f4f4ff"/>
<path d="M0.3 4.9 H3.8 V2.7 L8.1 7 L3.8 11.3 V9.1 H0.3 Z" fill="#25b716" stroke="#138c0c" stroke-width="0.7"/>
<path d="M1.2 6.2 H4.8 V5.6 L6.2 7 L4.8 8.4 V7.8 H1.2 Z" fill="#7be86a"/>
</svg>
<div class="abs lbl" style="left:938px;top:533px"><span class="sx" style="transform:scaleX(0.9201);transform-origin:left center"><u>S</u>air</span></div>
</body></html>
